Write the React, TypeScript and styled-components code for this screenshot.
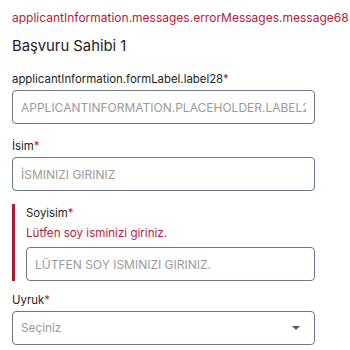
import React from "react";
import styled, { createGlobalStyle } from "styled-components";

const GlobalStyle = createGlobalStyle`
  html, body {
    margin: 0;
    padding: 0;
    background: #ffffff;
  }
  body {
    font-family: "Inter", "Noto Sans", sans-serif;
    color: #222222;
    overflow: hidden;
  }
`;

const Page = styled.div`
  padding: 8px 0 0 12px;
  width: 303px;
`;

const Banner = styled.div`
  font-size: 12px;
  line-height: 20px;
  color: #b3223b;
  white-space: nowrap;
  margin-bottom: 6px;
`;

const Heading = styled.h2`
  margin: 0 0 12px 0;
  font-size: 14.8px;
  line-height: 24px;
  font-weight: 400;
  color: #222222;
`;

const Group = styled.div<{ $invalid?: boolean }>`
  display: flex;
  flex-direction: column;
  margin-bottom: ${(p) => (p.$invalid ? "10px" : "13px")};
  ${(p) =>
    p.$invalid &&
    `
    border-left: 3px solid #a51d34;
    padding-left: 11px;
  `}
`;

const Label = styled.label`
  font-size: 11.4px;
  line-height: 18px;
  color: #222222;
  margin-bottom: 2px;
  white-space: nowrap;

  span {
    color: #b3223b;
  }
`;

const ErrorText = styled.div`
  font-size: 11.6px;
  line-height: 18px;
  color: #b3223b;
  margin-bottom: 5px;
`;

const TextInput = styled.input`
  box-sizing: border-box;
  width: 100%;
  height: 34px;
  border: 1px solid #6c7888;
  border-radius: 4px;
  padding: 0 8px;
  font-family: "Inter", "Noto Sans", sans-serif;
  font-size: 12px;
  color: #222;
  background: #fff;
  outline: none;

  &::placeholder {
    color: #9b9b9b;
  }
`;

const SelectBox = styled.div`
  box-sizing: border-box;
  width: 100%;
  height: 34px;
  border: 1px solid #6c7888;
  border-radius: 4px;
  padding: 0 14px 0 8px;
  display: flex;
  align-items: center;
  justify-content: space-between;
  font-size: 11.8px;
  color: #9b9b9b;
`;

const Caret = styled.span`
  width: 0;
  height: 0;
  border-left: 4px solid transparent;
  border-right: 4px solid transparent;
  border-top: 4px solid #555b63;
`;

const Required = () => <span>*</span>;

export default function App() {
  return (
    <>
      <GlobalStyle />
      <Page>
        <Banner>applicantInformation.messages.errorMessages.message68</Banner>
        <Heading>Başvuru Sahibi 1</Heading>

        <Group>
          <Label>
            applicantInformation.formLabel.label28<Required />
          </Label>
          <TextInput placeholder="APPLICANTINFORMATION.PLACEHOLDER.LABEL28" />
        </Group>

        <Group>
          <Label>
            İsim<Required />
          </Label>
          <TextInput placeholder="İSMINIZI GIRINIZ" />
        </Group>

        <Group $invalid>
          <Label>
            Soyisim<Required />
          </Label>
          <ErrorText>Lütfen soy isminizi giriniz.</ErrorText>
          <TextInput placeholder="LÜTFEN SOY ISMINIZI GIRINIZ." />
        </Group>

        <Group>
          <Label>
            Uyruk<Required />
          </Label>
          <SelectBox>
            Seçiniz
            <Caret />
          </SelectBox>
        </Group>
      </Page>
    </>
  );
}
